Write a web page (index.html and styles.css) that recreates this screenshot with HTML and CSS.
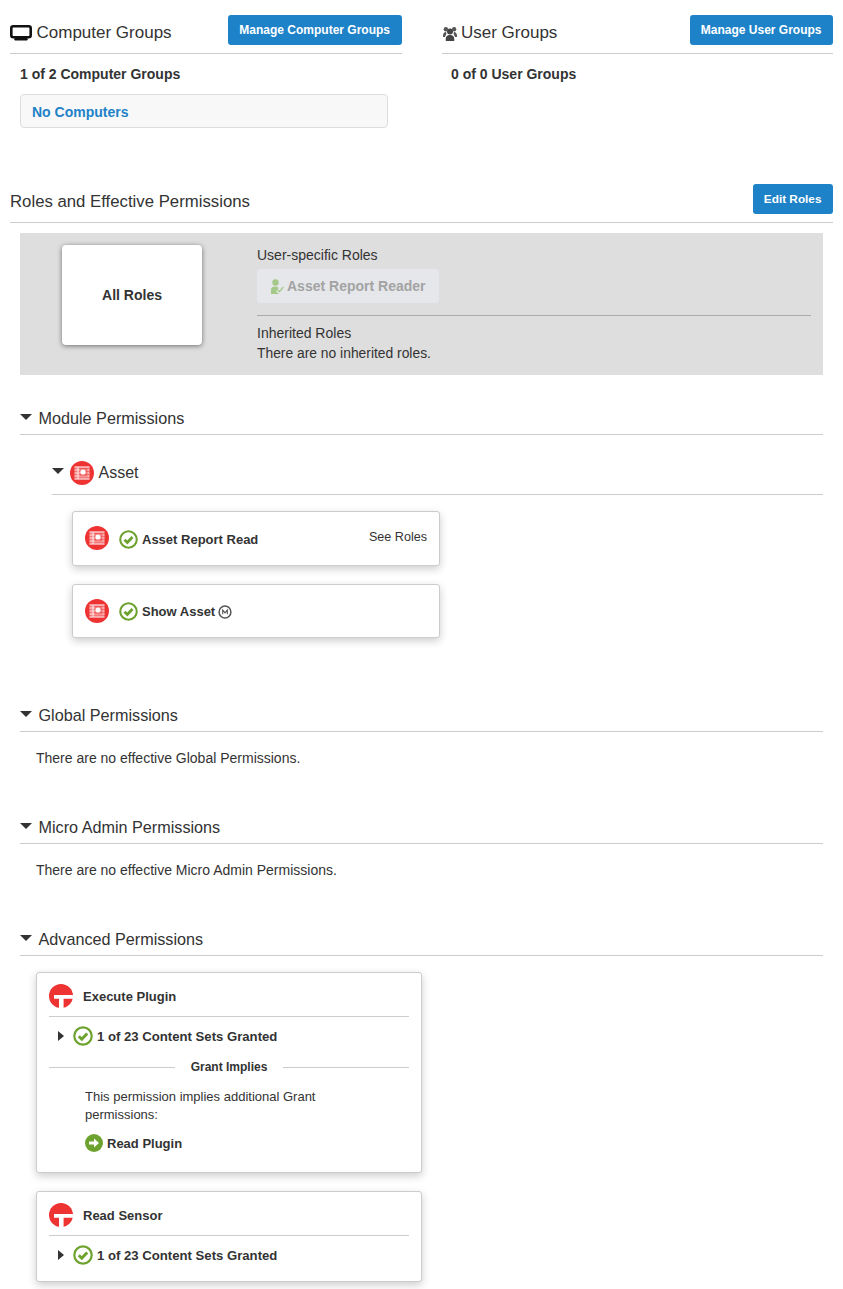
FILE: index.html
```html
<!DOCTYPE html>
<html lang="en">
<head>
<meta charset="utf-8">
<title>Permissions</title>
<link rel="stylesheet" href="styles.css">
</head>
<body>
<svg class="defs" width="0" height="0" aria-hidden="true">
  <defs>
    <symbol id="asset" viewBox="0 0 24 24">
      <circle cx="12" cy="12" r="12" fill="#ee3333"/>
      <path d="M4.500 5.500h15v13h-15z" fill="#f47a7a"/>
      <path d="M4.500 6h15M4.500 9h15M4.500 12h15M4.500 15h15M4.500 18h15M8 5.500v13" stroke="#fde3e3" stroke-width="1.100"/>
      <path d="M9.500 7h8v8.500h-8z" fill="#ee3333" opacity=".45"/>
      <circle cx="13" cy="11" r="2.600" fill="#fff"/>
    </symbol>
    <symbol id="check" viewBox="0 0 20 20">
      <circle cx="10" cy="10" r="8.700" fill="#fff" stroke="#6ea22f" stroke-width="2.200"/>
      <path d="M5.800 10.200l3 3 5.400-5.800" fill="none" stroke="#6ea22f" stroke-width="3"/>
    </symbol>
    <symbol id="tlogo" viewBox="0 0 24 24">
      <circle cx="12" cy="12" r="12" fill="#ee3333"/>
      <path d="M5 11h19v3.800h-9.400V24H10V14.800H5z" fill="#fff"/>
    </symbol>
  </defs>
</svg>

<div class="groups">
  <section class="group">
    <header class="group-head">
      <h2 class="title">
        <svg class="ico-monitor" viewBox="0 0 22 16"><rect x="1.300" y="1.300" width="19.400" height="10.900" rx="2" fill="none" stroke="#111" stroke-width="2.600"/><path d="M5 13h12l1 1.200L17 15.500H5L4 14.200z" fill="#111"/></svg>
        Computer Groups
      </h2>
      <a class="btn">Manage Computer Groups</a>
    </header>
    <p class="count">1 of 2 Computer Groups</p>
    <div class="nocomp">No Computers</div>
  </section>
  <section class="group">
    <header class="group-head">
      <h2 class="title">
        <svg class="ico-users" viewBox="0 0 14 15"><circle cx="7" cy="5.500" r="3" fill="#444"/><path d="M2.800 15c-.5-4 1-6 4.200-6s4.700 2 4.200 6z" fill="#444"/><circle cx="2.900" cy="3.200" r="2.200" fill="#555"/><circle cx="11.100" cy="3.200" r="2.200" fill="#555"/><path d="M0 11c-.2-3 .8-5 3-5l.5 1.500L2 11zM14 11c.2-3-.8-5-3-5l-.5 1.500L12 11z" fill="#555"/></svg>
        User Groups
      </h2>
      <a class="btn">Manage User Groups</a>
    </header>
    <p class="count count-user">0 of 0 User Groups</p>
  </section>
</div>

<header class="roles-head">
  <h2 class="title title-roles">Roles and Effective Permissions</h2>
  <a class="btn btn-edit">Edit Roles</a>
</header>

<div class="roles-panel">
  <div class="roles-card-wrap"><div class="roles-card">All Roles</div></div>
  <div class="roles-info">
    <div class="roles-label">User-specific Roles</div>
    <div class="role-chip">
      <svg class="ico-role" viewBox="0 0 14 15"><circle cx="5.500" cy="3.500" r="3.200" fill="#a5c98a"/><path d="M1 15V10.500C1 8.500 2.500 7.500 5 7.500s3.500.8 3.500 2L6 12.500l3 2.500z" fill="#a5c98a"/><path d="M7.500 11l2 1.500L13.500 8" fill="none" stroke="#a5c98a" stroke-width="1.300"/></svg>
      Asset Report Reader
    </div>
    <hr class="roles-rule">
    <div class="roles-label">Inherited Roles</div>
    <div class="roles-label roles-none">There are no inherited roles.</div>
  </div>
</div>

<section class="perm perm-module">
  <h3 class="perm-head"><span class="caret"></span>Module Permissions</h3>
  <div class="sub-head">
    <span class="caret"></span>
    <svg class="ico-asset-lg"><use href="#asset"/></svg>
    Asset
  </div>
  <div class="mod-card mod-card-first">
    <svg class="ico-asset"><use href="#asset"/></svg>
    <svg class="ico-check"><use href="#check"/></svg>
    <b class="mod-name">Asset Report Read</b>
    <span class="see">See Roles</span>
  </div>
  <div class="mod-card">
    <svg class="ico-asset"><use href="#asset"/></svg>
    <svg class="ico-check"><use href="#check"/></svg>
    <b class="mod-name">Show Asset</b>
    <svg class="ico-m" viewBox="0 0 14 14"><circle cx="7" cy="7" r="5.900" fill="none" stroke="#555" stroke-width="1.500"/><path d="M4.700 9.300V5L7 7.800 9.300 5v4.300" fill="none" stroke="#555" stroke-width="1.100"/></svg>
  </div>
</section>

<section class="perm perm-global">
  <h3 class="perm-head"><span class="caret"></span>Global Permissions</h3>
  <p class="none">There are no effective Global Permissions.</p>
</section>

<section class="perm perm-micro">
  <h3 class="perm-head"><span class="caret"></span>Micro Admin Permissions</h3>
  <p class="none">There are no effective Micro Admin Permissions.</p>
</section>

<section class="perm perm-adv">
  <h3 class="perm-head"><span class="caret"></span>Advanced Permissions</h3>
  <div class="adv-card adv-card-first">
    <div class="adv-title"><svg class="ico-t"><use href="#tlogo"/></svg>Execute Plugin</div>
    <div class="adv-row"><span class="caret-right"></span><svg class="ico-check"><use href="#check"/></svg>1 of 23 Content Sets Granted</div>
    <div class="implies"><span>Grant Implies</span></div>
    <p class="implies-text">This permission implies additional Grant permissions:</p>
    <div class="implied">
      <svg class="ico-arrow" viewBox="0 0 18 18"><circle cx="9" cy="9" r="9" fill="#6ea22f"/><path d="M4 7.500h5V4.500L14 9l-5 4.500v-3H4z" fill="#fff"/></svg>
      Read Plugin
    </div>
  </div>
  <div class="adv-card">
    <div class="adv-title"><svg class="ico-t"><use href="#tlogo"/></svg>Read Sensor</div>
    <div class="adv-row"><span class="caret-right"></span><svg class="ico-check"><use href="#check"/></svg>1 of 23 Content Sets Granted</div>
  </div>
</section>
</body>
</html>
```
FILE: styles.css
```css
* { box-sizing: border-box; }
html, body { margin: 0; padding: 0; }
body {
  width: 843px;
  height: 1289px;
  overflow: hidden;
  padding: 15px 10px 0;
  background: #fff;
  color: #333;
  font-family: "Liberation Sans", Arial, sans-serif;
  font-size: 14px;
}
.defs { position: absolute; }
.groups { display: flex; gap: 40px; height: 113px; }
.group { flex: 1; }
.group-head {
  display: flex;
  justify-content: space-between;
  align-items: flex-start;
  height: 39px;
  border-bottom: 1px solid #ccc;
}
.title {
  margin: 0;
  font-size: 17px;
  font-weight: 400;
  line-height: 20px;
  padding-top: 8px;
  color: #333;
  display: flex;
  align-items: center;
}
.title-roles { font-size: 16.750px; }
.ico-monitor { width: 22px; height: 16px; margin-right: 4.500px; }
.ico-users { width: 14px; height: 15px; margin: 1px 4.500px 0 1px; }
.btn {
  display: block;
  background: #1e82c8;
  color: #fff;
  font-size: 12px;
  font-weight: 700;
  line-height: 30px;
  height: 30px;
  padding: 0 11.500px 0 11px;
  border-radius: 3px;
}
.btn-edit { font-size: 11.800px; }
.count { margin: 12px 0 0 10px; font-weight: 700; line-height: 16px; }
.count-user { margin-left: 9.500px; }
.nocomp {
  margin: 12px 14px 0 10px;
  height: 34px;
  line-height: 34px;
  padding-left: 11px;
  background: #f8f8f8;
  border: 1px solid #ddd;
  border-radius: 4px;
  color: #1e82c8;
  font-weight: 700;
}
.roles-head {
  margin-top: 56px;
  height: 39px;
  display: flex;
  justify-content: space-between;
  align-items: flex-start;
  border-bottom: 1px solid #ccc;
}
.roles-panel {
  margin: 10px 10px 0;
  height: 142px;
  background: #dedede;
  display: flex;
}
.roles-card-wrap { width: 237px; padding: 12px 0 0 42px; }
.roles-card {
  width: 140px;
  height: 100px;
  background: #fff;
  border-radius: 4px;
  box-shadow: 0 1px 5px rgba(0,0,0,.5);
  display: flex;
  align-items: center;
  justify-content: center;
  font-weight: 700;
  font-size: 14px;
  line-height: 100px;
}
.roles-info { flex: 1; padding: 12px 12px 0 0; }
.roles-label { line-height: 20px; }
.roles-none { font-size: 13.850px; }
.role-chip {
  margin-top: 4px;
  width: 182px;
  height: 34px;
  background: #e6e7ea;
  border-radius: 4px;
  color: #a3a3a3;
  font-weight: 700;
  display: flex;
  align-items: center;
  padding-left: 13px;
}
.ico-role { width: 14px; height: 15px; margin-right: 3px; }
.roles-rule { margin: 12px 0 7px; border: 0; border-top: 1px solid #aaa; }
.perm { margin: 0 10px; }
.perm-head {
  margin: 0;
  height: 30px;
  font-size: 16.200px;
  font-weight: 400;
  line-height: 20px;
  padding-bottom: 4px;
  border-bottom: 1px solid #ccc;
  display: flex;
  align-items: center;
  color: #333;
}
.caret {
  width: 0;
  height: 0;
  border-left: 6.500px solid transparent;
  border-right: 6.500px solid transparent;
  border-top: 6.500px solid #333;
  margin: 0 6.500px 1px 0;
}
.perm-module { margin-top: 30px; }
.sub-head {
  margin: 18px 0 0 32px;
  height: 42px;
  padding-bottom: 2px;
  border-bottom: 1px solid #ccc;
  display: flex;
  align-items: center;
  font-size: 16px;
}
.sub-head .caret { margin: 0 5px 4px 0; }
.ico-asset-lg { width: 24px; height: 24px; margin: 0 4.500px 0 1px; }
.mod-card {
  margin: 18px 0 0 52px;
  width: 368px;
  height: 54px;
  background: #fff;
  border: 1px solid #ccc;
  border-radius: 3px;
  box-shadow: 0 3px 8px rgba(0,0,0,.2);
  display: flex;
  align-items: center;
  padding: 1px 0 0 12px;
}
.mod-card-first { margin-top: 16px; height: 55px; }
.ico-asset { width: 24px; height: 24px; margin: -2px 10px 0 0; }
.ico-check { width: 19px; height: 19px; margin-right: 4px; flex: none; }
.mod-name { font-size: 13px; }
.see { margin: -4px 12px 0 auto; font-size: 12.600px; }
.ico-m { width: 14px; height: 14px; margin-left: 3px; }
.perm-global { margin-top: 64px; }
.perm-micro { margin-top: 46px; }
.perm-adv { margin-top: 46px; }
.none { margin: 16px 0 0 16px; line-height: 20px; }
.adv-card {
  margin: 18px 0 0 16px;
  width: 386px;
  height: 91px;
  background: #fff;
  border: 1px solid #ccc;
  border-radius: 3px;
  box-shadow: 0 3px 8px rgba(0,0,0,.2);
  padding: 0 12px;
}
.adv-card-first { margin-top: 16px; height: 201px; }
.adv-title {
  height: 44px;
  padding-top: 3px;
  display: flex;
  align-items: center;
  border-bottom: 1px solid #ccc;
  font-size: 13px;
  font-weight: 700;
}
.ico-t { width: 24px; height: 24px; margin-right: 10px; }
.adv-row {
  height: 38px;
  display: flex;
  align-items: center;
  padding-left: 9px;
  font-size: 13.150px;
  font-weight: 700;
}
.adv-row .ico-check { width: 20px; height: 20px; }
.caret-right {
  width: 0;
  height: 0;
  border-top: 5px solid transparent;
  border-bottom: 5px solid transparent;
  border-left: 6px solid #333;
  margin-right: 9px;
}
.implies {
  display: flex;
  align-items: center;
  gap: 16px;
  height: 24px;
  font-size: 12px;
  font-weight: 700;
}
.implies::before, .implies::after {
  content: "";
  flex: 1;
  border-top: 1px solid #ccc;
}
.implies-text { margin: 9px 60px 0 36px; font-size: 13px; line-height: 18px; }
.implied {
  margin: 10px 0 0 36px;
  display: flex;
  align-items: center;
  font-size: 13px;
  font-weight: 700;
  height: 18px;
}
.ico-arrow { width: 18px; height: 18px; margin-right: 4px; }
```
